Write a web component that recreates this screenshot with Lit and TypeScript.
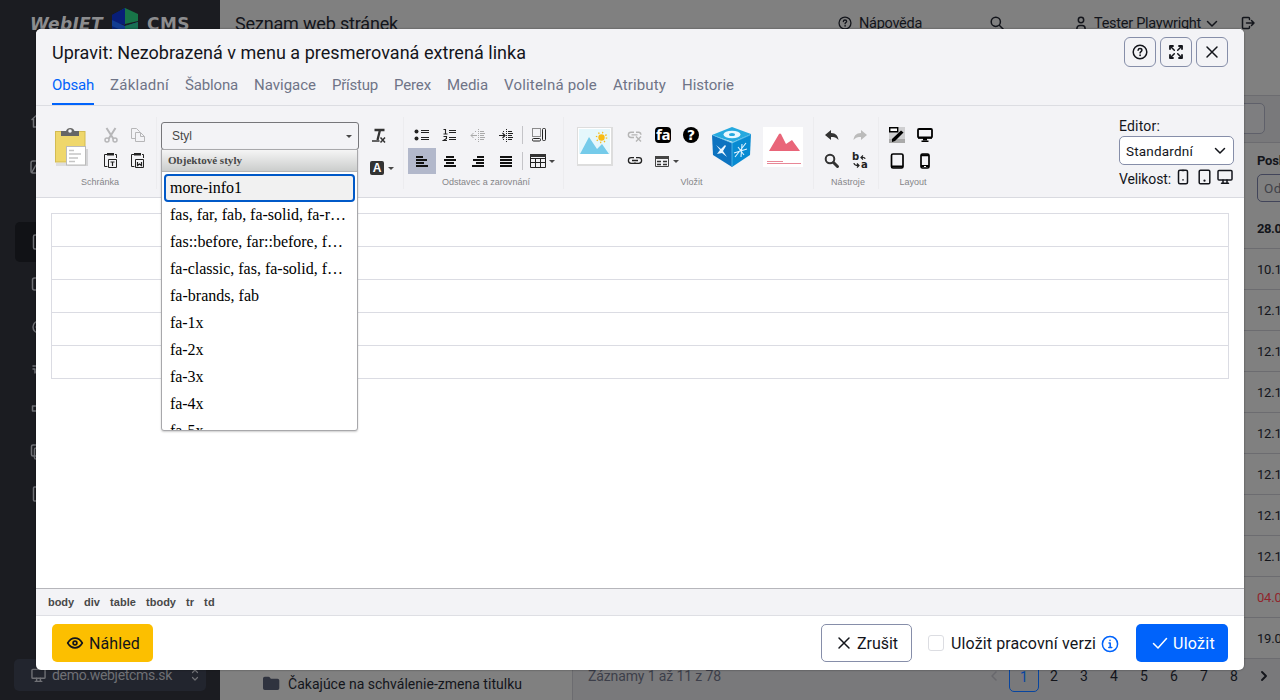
import { LitElement, html, css, svg, nothing } from "lit";
import { customElement, property } from "lit/decorators.js";

/** One line of text whose tracking is spread so that it takes a given width. */
@customElement("fit-text")
class FitText extends LitElement {
  @property() text = "";
  @property({ type: Number }) width = 0;
  static styles = css`
    :host { display: inline-block; white-space: pre; flex: none; }
  `;
  render() {
    return html`<span>${this.text}</span>`;
  }
  updated() {
    const span = this.renderRoot.querySelector("span") as HTMLElement;
    span.style.letterSpacing = "0px";
    const natural = span.getBoundingClientRect().width;
    if (this.width && this.text.length) {
      span.style.letterSpacing = `${(this.width - natural) / this.text.length}px`;
    }
  }
}

const fit = (text: string, width: number) =>
  html`<fit-text .text=${text} .width=${width}></fit-text>`;

const icon = (w: number, h: number, body: unknown, box = `0 0 ${w} ${h}`) =>
  html`<svg width=${w} height=${h} viewBox=${box} fill="none" stroke="currentColor" stroke-width="1.5" stroke-linecap="round" stroke-linejoin="round">${body}</svg>`;

const help = (s: number) =>
  icon(s, s, svg`<circle cx="8" cy="8" r="6.8"/><path d="M6.1 6.3C6.2 5.2 7 4.6 8 4.6s1.9.7 1.9 1.6c0 1.3-1.8 1.4-1.8 2.7"/><path d="M8.1 11.2v.1" stroke-width="1.8"/>`, "0 0 16 16");
const search = icon(14, 14, svg`<circle cx="5.8" cy="5.8" r="4.6"/><path d="m9.3 9.3 4 4"/>`);
const user = icon(12, 15, svg`<circle cx="6" cy="4" r="2.700"/><path d="M1.900 14v-1.600a3 3 0 0 1 3-3h2.200a3 3 0 0 1 3 3V14"/>`);
const chevron = icon(12, 8, svg`<path d="m1.500 1.500 4.500 4.500 4.500-4.500"/>`);
const logout = icon(14, 14, svg`<path d="M8.500 3.500V2.500a1 1 0 0 0-1-1h-5a1 1 0 0 0-1 1v9a1 1 0 0 0 1 1h5a1 1 0 0 0 1-1v-1M5.500 7h7.500M10.500 4.500 13 7l-2.500 2.500"/>`);
const expand = icon(16, 16, svg`<path d="M2 5V2h3M11 2h3v3M14 11v3h-3M5 14H2v-3" stroke-width="1.800"/><path d="M2.300 2.300l4 4M13.700 2.300l-4 4M13.700 13.700l-4-4M2.300 13.700l4-4"/>`);
const cross = icon(14, 14, svg`<path d="m2 2 10 10M12 2 2 12"/>`);
const eye = icon(18, 14, svg`<path d="M1.700 7C3.500 4 5.800 2.200 9 2.200S14.500 4 16.300 7C14.500 10 12.200 11.800 9 11.800S3.500 10 1.700 7Z" stroke-width="1.700"/><circle cx="9" cy="7" r="1.900" stroke-width="1.700"/>`);
const check = icon(16, 14, svg`<path d="m1.500 7.500 4.500 4.500 8.500-9.500"/>`);
const info = icon(18, 18, svg`<circle cx="9" cy="9" r="7.600"/><path d="M8 8h1.200v4.500M7.800 12.600h3M9 5.300v.1"/>`);
const monitor = (w: number) =>
  icon(w, w, svg`<rect x="1" y="1.500" width="14" height="9.500" rx="1"/><path d="M6 11v3M10 11v3M4.500 14.300h7"/>`, "0 0 16 16");
const phone = icon(12, 16, svg`<rect x="1.500" y="1.200" width="9" height="13.600" rx="1.500"/><path d="M6 10.800v.1M5 1.500h2"/>`);
const tablet = icon(13, 16, svg`<rect x="1.200" y="1.200" width="10.600" height="13.600" rx="1.300"/><path d="M6.500 11.500v.2" stroke-width="2.200"/>`);
const prev = icon(8, 12, svg`<path d="m6 2-4 4 4 4"/>`);
const next = icon(8, 12, svg`<path d="m2 2 4 4-4 4" stroke-width="1.900"/>`);
const updown = icon(8, 12, svg`<path d="m1.500 3.500 2.500-2.500 2.500 2.500M1.500 8.500 4 11l2.500-2.500" stroke-width="1.200"/>`);
const folder = html`<svg width="17" height="15" viewBox="0 0 17 15"><path fill="#2f333f" d="M0 2.500A1.800 1.800 0 0 1 1.800.7h3.700c.6 0 1 .2 1.400.7l.9 1.300h6.700A1.800 1.800 0 0 1 16.300 4.500v7.700A1.800 1.800 0 0 1 14.500 14H1.800A1.800 1.800 0 0 1 0 12.200Z"/></svg>`;

const navIcons = [
  svg`<path d="M2 8.500 9 2l7 6.500M3.500 8v8h3.500v-5h4v5h3.500V8"/>`,
  svg`<rect x="1" y="3" width="16" height="12" rx="2"/><path d="m2 14 4-7 4 5 3-3 3 5"/>`,
  svg`<rect x="3.500" y="2" width="12" height="14" rx="1.500"/>`,
  svg`<rect x="2.500" y="3" width="13" height="12" rx="2"/>`,
  svg`<circle cx="9" cy="10" r="6"/><path d="M6 10h6"/>`,
  svg`<path d="M3 7h12M5 13h10M3 10h2v4"/>`,
  svg`<rect x="2.500" y="5" width="5" height="5"/><path d="M8 8h7"/>`,
  svg`<rect x="1.500" y="2" width="10" height="11" rx="1.500"/><rect x="4.500" y="5" width="11" height="11" rx="1.500"/>`,
  svg`<rect x="3.500" y="2" width="12" height="14" rx="1"/>`,
];

const px = (body: unknown, w = 16, h = 16) =>
  html`<svg width=${w} height=${h} viewBox="0 0 ${w} ${h}" fill="none" stroke="#222">${body}</svg>`;

const lines = (rows: [number, number, number][]) =>
  svg`${rows.map(([x, y, w]) => svg`<rect x=${x} y=${y} width=${w} height="2" fill="#111" stroke="none"/>`)}`;

const ck = {
  paste: px(svg`<g stroke="none"><path fill="#d8d8da" d="M1 36h12v3H1z" opacity=".8"/><rect x=".5" y="4.500" width="29.500" height="30.500" fill="#efd76b" stroke="#d3bb52"/><path d="M6 9V4h5a4.500 4.500 0 0 1 8.500 0H24v5Z" fill="#666"/><circle cx="15" cy="4" r="1.800" fill="#f3f3f6"/><path d="M13 22h20v17H13z" fill="#d4d4d6"/><rect x="11.500" y="19.500" width="19" height="18.500" fill="#fff" stroke="#bbb"/></g><path d="M14 23.500h5M14 27h12M14 31h9M14 34.500h6" stroke="#c5c5c5" stroke-width="1.500"/>`, 33, 41),
  cut: px(svg`<g stroke="#b6b6b8"><path d="m3.500 1 7 11M12.500 1l-7 11" stroke-width="2"/><circle cx="4" cy="13" r="2" stroke-width="1.500"/><circle cx="12" cy="13" r="2" stroke-width="1.500"/></g>`),
  copy: px(svg`<g stroke="#b6b6b8"><path d="M5.500 11.500h-4v-10h5l3 3v1"/><path d="M5.500 5.500h5l4 4v5h-9zM10.500 5.500v4h4"/></g>`),
  pasteText: px(svg`<path d="M4 1.500H1.500v12h3M12 1.500h1.500V5"/><path d="M4 0h7v2.500H4z" fill="#222" stroke="none"/><path d="M5.500 6.500h8v8h-8z"/><path d="M7.500 9h4M9.500 9v4" stroke-width="1.200"/>`),
  pasteWord: px(svg`<path d="M4 1.500H1.500v12h3M12 1.500h1.500V5"/><path d="M4 0h7v2.500H4z" fill="#222" stroke="none"/><path d="M5.500 6.500h8v8h-8z"/><path d="M7.500 9v3.500l2-1.500 2 1.500V9" stroke-width="1.200"/>`),
  clear: px(svg`<path d="M3.500 2h10M9 2 6.500 12" stroke="#333" stroke-width="2.300"/><path d="M1 13h7.500" stroke="#333" stroke-width="1.300"/><path d="m9.500 9.500 4.500 5M14 9.500l-4.500 5" stroke="#333" stroke-width="1.500"/>`),
  bullets: px(svg`<circle cx="2.500" cy="4.500" r="2" fill="#222" stroke="none"/><circle cx="2.500" cy="11.500" r="2" fill="#222" stroke="none"/><path d="M7 3.500h8M7 5.500h8M7 10.500h8M7 12.500h8"/>`),
  numbers: px(svg`<path d="M1.500 2.500h2V7M1.500 7h4M1.500 9.500h3v2l-3 2h3.500" stroke-width="1.100"/><path d="M7 3.500h7M7 5.500h7M7 10.500h7M7 12.500h7"/>`),
  outdent: px(svg`<g stroke="#aaa"><path d="M5 4.500h2M5 12.500h2M8.500 2v13" stroke-dasharray="1 1"/><path d="M10 4.500h4M10 6.500h5M10 8.500h4M10 10.500h5M10 12.500h4M1 8.500h6M3.500 6 1 8.500 3.500 11"/></g>`),
  indent: px(svg`<path d="M5 4.500h2M5 12.500h2M8.500 2v13" stroke-dasharray="1 1"/><path d="M10 4.500h4M10 6.500h5M10 8.500h4M10 10.500h5M10 12.500h4M1 8.500h6M4.500 6 7 8.500 4.500 11" stroke-width="1.200"/>`),
  blockDiv: px(svg`<path d="M1.500 1.500h8v8h-8z" stroke-dasharray="1 1"/><rect x="11.500" y="1.500" width="3" height="12" rx="1"/><rect x="1.500" y="11.500" width="8" height="2.500" rx="1"/>`),
  left: px(lines([[2, 3, 7], [2, 6, 11], [2, 9, 8], [2, 12, 12]])),
  center: px(lines([[4, 3, 8], [2, 6, 12], [4, 9, 8], [2, 12, 12]])),
  right: px(lines([[7, 3, 7], [3, 6, 11], [6, 9, 8], [2, 12, 12]])),
  justify: px(lines([[2, 3, 12], [2, 6, 12], [2, 9, 12], [2, 12, 12]])),
  table: px(svg`<path d="M.5 2.500h15v12H.5zM.5 5.500h15M.5 9.500h15M5.500 5v9M10.500 5v9"/><path d="M0 1h16v3H0z" fill="#333" stroke="none"/>`),
  image: px(svg`<g stroke="none"><rect width="36" height="39" fill="#ddd"/><rect x="1" y="1" width="33" height="36" fill="#fff"/><rect x="2" y="2" width="31" height="25" fill="#e5f7fc"/><path d="m3 27 9-17 8 12 5-5 7 10z" fill="#75cbea"/><circle cx="24.500" cy="10.500" r="3.200" fill="#f8bc16"/></g><circle cx="24.500" cy="10.500" r="5" stroke="#f8bc16" stroke-dasharray="1.200 2.730" stroke-width="1.500"/>`, 36, 39),
  unlink: px(svg`<g stroke="#b5b5b5" stroke-width="1.400"><path d="M7 5.200H4a2.600 2.600 0 0 0 0 5.300h3M9 5.200h3a2.600 2.600 0 0 1 2 2.500M4.500 7.900h6"/><path d="m9 9.500 5 5M14 9.500l-5 5"/></g>`),
  link: px(svg`<path d="M7 4.700H4.200a2.800 2.800 0 0 0 0 5.600H7a2 2 0 0 0 1.500-.8M9 4.700h2.800a2.800 2.800 0 0 1 0 5.600H9a2 2 0 0 1-1.500-.8M5 7.500h6" stroke-width="1.300"/>`),
  fa: html`<span class="fa">fa</span>`,
  help: html`<span class="qm">?</span>`,
  form: px(svg`<path d="M1.500 3.500h13v10h-13z" stroke="#444"/><path d="M1 3h14v3H1z" fill="#444" stroke="none"/><path d="M3 8.500h4M3 11.500h4M9 8.500h4M9 11.500h4" stroke="#333" stroke-width="1.700"/>`),
  cube: px(svg`<g stroke="none"><path d="M20 0 39 7 21 15 0 8Z" fill="#25a9df"/><path d="m0 8 20 8v24L1 28Z" fill="#0d73c0"/><path d="m20 16 19-9-1 21-18 12Z" fill="#088bd2"/><ellipse cx="20" cy="7.500" rx="8.500" ry="3.800" fill="#e8f8ff"/><ellipse cx="20" cy="7.500" rx="3" ry="1.600" fill="#25a9df"/><path d="m4 18 5 4 4-4 1 1-3 5 4 6-5-4-5 1 3-4Z" fill="#eaf6ff"/></g><path d="m23 30 11-14M26 20l6 8M22 26l13-4M30 17l-1 13" stroke="#dff3ff" stroke-width="1.100"/><path d="m1 8 19 8 18-8M20 16v23" stroke="#58c0ed" stroke-width=".8"/>`, 39, 40),
  card: px(svg`<g stroke="none"><rect width="40" height="40" fill="#fff"/><path d="M6 24 16 7q1-1 2 0l5 10 6-4 8 11z" fill="#e96579"/></g><path d="M4 34.500h16M4 36.500h34" stroke="#e88797"/>`, 40, 40),
  undo: px(svg`<path d="M7 3v3c5 0 7 3 7.500 7C12.500 10.500 10 10 7 10v3L1 8Z" fill="#333" stroke="none"/>`),
  redo: px(svg`<path d="M9 3v3c-5 0-7 3-7.500 7C3.500 10.500 6 10 9 10v3l6-5Z" fill="#bbb" stroke="none"/>`),
  find: px(svg`<circle cx="6" cy="6" r="4.300" stroke="#333" stroke-width="2"/><path d="m9.500 9.500 4 4" stroke="#333" stroke-width="3" stroke-linecap="round"/>`),
  replace: html`<span class="rep"><b>b</b><b>a</b>${px(svg`<path d="M9 4.500h2.500c1 0 1.500.5 1.500 1.500M11 2.500l-2 2 2 2M2 10c0 2 1 2.500 4.500 2.500M5 10.500l2 2-2 2" stroke-width="1.200"/>`)}</span>`,
  blocks: px(svg`<path d="M0 0h16v16H0z" fill="#cfcfd1" stroke="none"/><path d="M0 12h16v4H0z" fill="#aaa" stroke="none"/><path d="M.7.7h8v4h-8z" fill="#fff" stroke="#000" stroke-width="1.400"/><path d="M3 15v-3L12 3.500l2.500 2L6 14z" fill="#000" stroke="none"/>`),
  desktop: px(svg`<rect x="1" y="2" width="14" height="8.500" rx="1" stroke="#000" stroke-width="1.800"/><path d="M1 11h14M6 12.500h4M4.500 14.200h7" stroke="#000" stroke-width="1.500"/>`),
  tab: px(svg`<rect x="2.500" y="1" width="11.500" height="14" rx="1.500" stroke="#000" stroke-width="1.700"/><path d="M2 13.500h12" stroke="#000" stroke-width="1.800"/>`),
  phone: px(svg`<rect x="4" y="1" width="8" height="14" rx="1.500" stroke="#000" stroke-width="1.700"/><path d="M4 13h8M4 2.300h8" stroke="#000" stroke-width="2"/><path d="M7 13.500h2" stroke="#fff"/>`),
};

const tabs: [string, number][] = [
  ["Obsah", 42], ["Základní", 59], ["Šablona", 53], ["Navigace", 62], ["Přístup", 46],
  ["Perex", 37], ["Media", 41], ["Volitelná pole", 93], ["Atributy", 53], ["Historie", 52],
];
const styleNames: [string, number][] = [
  ["more-info1", 72], ["fas, far, fab, fa-solid, fa-r…", 176], ["fas::before, far::before, f…", 173],
  ["fa-classic, fas, fa-solid, f…", 173], ["fa-brands, fab", 89], ["fa-1x", 33.5], ["fa-2x", 33.5],
  ["fa-3x", 33.5], ["fa-4x", 33.5], ["fa-5x", 33.5],
];
const dates = ["28.0", "10.1", "12.1", "12.1", "12.1", "12.1", "12.1", "12.1", "12.1", "04.0", "19.0"];
const path: [string, number][] = [["body", 26], ["div", 16], ["table", 26], ["tbody", 30], ["tr", 8], ["td", 11]];

@customElement("app-root")
class AppRoot extends LitElement {
  static styles = css`
    :host { display: block; width: 1280px; height: 700px; overflow: hidden; position: relative; font-family: Roboto, "Noto Sans", sans-serif; color: #13151b; }
    * { box-sizing: border-box; }
    svg { display: block; flex: none; }
    .page { display: flex; height: 700px; background: #808080; }
    .side { width: 220px; background: #1b1c21; display: flex; flex-direction: column; color: #6f7075; flex: none; }
    .brand { height: 97px; display: flex; padding: 8px 0 0 30px; color: #8c8c8e; font: italic bold 17px/32px "DejaVu Sans", sans-serif; }
    .brand svg { margin: 0 8px 0 8px; }
    .cms { font-style: normal; }
    .nav { height: 42px; display: flex; align-items: center; padding-left: 15px; margin-left: 15px; border-radius: 5px; }
    .nav.first { height: 46px; }
    .nav.second { height: 48px; margin-bottom: 30px; }
    .nav.on { background: #111216; height: 40px; margin-top: 1px; margin-bottom: 1px; }
    .site { margin: auto 14px 9px; height: 32px; background: #22252e; border-radius: 5px; display: flex; align-items: center; padding: 0 7px 0 17px; font-size: 14px; }
    .site fit-text { margin: 0 auto 0 6px; }
    .main { flex: 1; display: flex; flex-direction: column; min-width: 0; }
    .top { height: 95px; display: flex; align-items: flex-start; padding: 14px 26px 0 15px; font-size: 14.500px; line-height: 20px; }
    .top svg { margin-top: 2px; }
    .ttl { font-size: 18px; }
    .h1 { margin-left: 440px; margin-right: 7px; }
    .h2 { margin-left: 68px; margin-right: 71px; }
    .h3 { margin-right: 7px; }
    .top .chev { margin: 4px 23px 0 5px; }
    .split { flex: 1; display: flex; border-top: 1px solid #6c6c70; min-height: 0; }
    .tree { width: 353px; border-right: 1px solid #6c6c70; display: flex; align-items: flex-end; padding: 0 0 7px 43px; font-size: 14px; line-height: 18px; gap: 8px; flex: none; }
    .tree svg { margin-bottom: 2px; }
    .data { flex: 1; display: flex; flex-direction: column; min-width: 0; }
    .filter { height: 47px; background: #79797b; border-bottom: 1px solid #6c6c70; padding: 7px 15px 0; display: flex; justify-content: flex-end; flex: none; }
    .filter div { width: 60px; height: 31px; border: 1px solid #5f606a; border-radius: 5px; background: #7e7e80; }
    .col { padding-left: 684px; flex: none; overflow: hidden; white-space: nowrap; font-size: 13px; }
    .head { height: 65px; padding-top: 9px; line-height: 18px; font-weight: bold; }
    .head .in { margin-top: 4px; width: 60px; height: 28px; border: 1px solid #42455a; border-radius: 5px; font-weight: 400; font-size: 13.500px; line-height: 26px; padding-left: 6px; color: #404249; }
    .row { height: 41px; line-height: 42px; border-bottom: 1px solid #6c6c70; }
    .row.bold { font-weight: bold; }
    .row.red { color: #91252c; }
    .foot { flex: 1; background: #79797b; display: flex; align-items: center; padding: 0 12px 7px 15px; font-size: 14px; color: #3d3f4a; }
    .pages { margin-left: auto; display: flex; align-items: center; color: #13151b; }
    .pages span { width: 30px; text-align: center; line-height: 30px; }
    .pages .cur { border: 1px solid #0745a0; border-radius: 5px; color: #0745a0; height: 31px; }
    .pages .prev { color: #68686d; margin-right: 11px; }
    .pages .next { margin-left: 11px; }

    .modal { position: absolute; left: 36px; top: 29px; width: 1208px; height: 641px; background: #fff; border-radius: 5px; overflow: hidden; display: flex; flex-direction: column; box-shadow: 0 0 2px rgba(0,0,0,.5); }
    .mh { height: 77px; background: #f3f3f6; border-bottom: 1px solid #dcdde2; padding: 8px 16px 0; flex: none; }
    .mt { display: flex; justify-content: space-between; height: 37px; font-size: 18px; line-height: 32px; }
    .btns { display: flex; gap: 4px; }
    .ib { width: 32px; height: 30px; border: 1px solid #868ea9; border-radius: 6px; display: grid; place-items: center; }
    .tabs { display: flex; gap: 16px; height: 31px; font-size: 15px; line-height: 22px; color: #6f7487; }
    .tabs .on { color: #0063fb; border-bottom: 2px solid #0063fb; }
    .rib { height: 92px; background: #f3f3f6; border-bottom: 1px solid #d9dae0; display: flex; padding-top: 11px; flex: none; }
    .g { height: 72px; display: flex; flex-direction: column; border-right: 1px solid #ececef; padding-top: 5px; flex: none; }
    .cells { display: flex; height: 53px; align-items: flex-start; }
    .grid { display: grid; grid-auto-rows: 26px; }
    .grid > * { display: flex; place-content: center; align-items: center; }
    .lab { font: 9px/12px "Liberation Sans", sans-serif; color: #858588; text-align: center; margin-top: 1px; }
    .g1 { width: 121px; padding-left: 19px; }
    .g1 .cells > svg { margin-top: 5px; }
    .g1 .grid { grid-template-columns: 28px 26px; margin-left: 9px; }
    .g1 .lab { width: 90px; }
    .g2 { width: 247px; padding-left: 4px; flex-direction: row; }
    .g3 { width: 160px; padding-left: 4px; }
    .g3 .grid { grid-template-columns: repeat(4, 28px) 3px 32px; }
    .g3 .grid .tb { justify-content: flex-start; padding-left: 7px; }
    .sep { width: 1px; height: 18px; margin: 4px 0 4px 2px; background: #c4c4c8; }
    .hl { background: #b2b8cb; }
    .g3 .lab { width: 156px; }
    .g4 { width: 250px; padding-left: 13px; }
    .g4 .grid { grid-template-columns: repeat(3, 28px); margin: 0 7px 0 8px; }
    .g4 .grid .fm { justify-content: flex-start; padding-left: 5px; }
    .g4 .cells > svg { margin-top: 5px; }
    .g4 .cells > svg:last-child { margin-left: 12px; }
    .g4 .lab { width: 229px; }
    .g5 { width: 65px; padding-left: 4px; }
    .g6 { border: 0; padding-left: 4px; width: 64px; }
    .g5 .grid, .g6 .grid { grid-template-columns: 28px 28px; }
    .combo { width: 198px; height: 28px; border: 1px solid #76767a; border-radius: 3px; display: flex; align-items: center; justify-content: space-between; padding: 0 6px 0 10px; font: 12px "Liberation Sans", sans-serif; color: #484848; }
    .car { width: 0; height: 0; border: 3px solid transparent; border-top-color: #474747; border-bottom: 0; flex: none; }
    .fmt { display: flex; flex-direction: column; padding-left: 12px; }
    .fmt > svg { margin-top: 6px; }
    .bg { display: flex; align-items: center; gap: 4px; margin: 17px 0 0 -1px; }
    .bg b { width: 14px; height: 14px; border-radius: 2px; background: #333; color: #fff; font: bold 12px/14px "Liberation Sans", sans-serif; text-align: center; }
    .gap { margin-left: 3px; }
    .fa { width: 16px; height: 16px; border-radius: 4px; background: #000; color: #fff; font: bold 15px/14px "Noto Sans", sans-serif; letter-spacing: -.5px; text-align: center; }
    .qm { width: 16px; height: 16px; border-radius: 50%; background: #000; color: #fff; font: bold 14px/16px "DejaVu Sans", sans-serif; text-align: center; }
    .rep { width: 16px; height: 16px; position: relative; font: 10px/10px "DejaVu Sans", sans-serif; color: #222; }
    .rep b { position: absolute; left: 0; top: -1px; }
    .rep b + b { left: 9px; top: 7px; }
    .ed { margin: 0 10px 0 auto; width: 115px; font-size: 14px; line-height: 18px; }
    .sel { height: 29px; margin: 1px 0 2px; background: #fff; border: 1px solid #868ea9; border-radius: 5px; display: flex; justify-content: space-between; align-items: center; padding: 0 7px 0 6px; font-size: 13.500px; }
    .vel { display: flex; align-items: center; height: 24px; }
    .vel svg { margin-top: -4px; margin-left: 8px; }
    .vel svg:nth-of-type(1) { margin-left: 6px; }
    .vel svg:nth-of-type(2) { margin-left: 9px; }
    .vel svg:nth-of-type(3) { margin-left: 6px; }
    .body { flex: 1; padding: 15px 15px 0; }
    .tbl { border: 1px solid #dbdce3; border-bottom: 0; }
    .tbl div { height: 33px; border-bottom: 1px solid #dbdce3; }
    .stat { height: 28px; background: #f3f3f6; border-top: 1px solid #b6b6bb; border-bottom: 1px solid #dedfe4; display: flex; gap: 10px; padding-left: 12px; font: bold 11px/26px "Liberation Sans", sans-serif; color: #484848; flex: none; }
    .mf { height: 54px; display: flex; align-items: center; padding: 0 16px; font-size: 16px; flex: none; }
    .b { height: 38px; border-radius: 5px; display: flex; align-items: center; }
    .yellow { background: #fcbf00; width: 101px; padding-left: 14px; gap: 5px; }
    .white { border: 1px solid #868ea9; width: 91px; padding-left: 15px; gap: 6px; margin-left: auto; margin-right: 16px; }
    .blue { background: #0063fb; color: #fff; width: 92px; padding-left: 16px; gap: 5px; margin-left: 17px; }
    .cb { width: 16px; height: 16px; border: 1px solid #dcdde2; border-radius: 3px; margin-right: 7px; }
    .inf { color: #0063fb; margin: 1px 0 0 5px; }

    .menu { position: absolute; left: 161px; top: 149px; width: 197px; height: 282px; background: #fff; border: 1px solid #a8a8ab; border-radius: 0 0 3px 3px; overflow: hidden; box-shadow: 0 1px 2px rgba(0,0,0,.2); font: 16px/26px "Liberation Serif", serif; color: #000; }
    .mhd { height: 22px; background: linear-gradient(#f5f5f5, #cbcdcc); border-bottom: 1px solid #b6b6b6; font-size: 11px; line-height: 21px; font-weight: bold; color: #474747; padding-left: 6px; }
    .opt { height: 27px; padding-left: 8px; }
    .opt.on { height: 28px; margin: 2px 2px 0; padding-left: 4px; border: 2px solid #0059c8; border-radius: 4px; background: #f1f1f1; line-height: 24px; }
  `;

  render() {
    return html`
      <div class="page">
        <div class="side">
          <div class="brand">
            ${fit("WebJET", 73)}
            <svg width="28" height="30" viewBox="0 0 28 30"><path d="M14 0 1 7v8l13-4z" fill="#071c7b"/><path d="m14 0 13 6v7L14 16 1 8z" fill="#187548"/><path d="M14 0v17L1 14V7z" fill="#081e78"/><path d="m1 12 13 6 13-4v10l-13 6-13-6z" fill="#123d91"/><path d="m14 18 13-4v10l-13 6z" fill="#187053"/><path d="m1 18 13 6v6L1 24z" fill="#0a2777"/></svg>
            <span class="cms">${fit("CMS", 43)}</span>
          </div>
          ${navIcons.map((n, i) => html`<div class="nav ${["first", "second", "on"][i] ?? ""}">${icon(18, 18, n)}</div>`)}
          <div class="site">${monitor(15)}${fit("demo.webjetcms.sk", 120)}${updown}</div>
        </div>
        <div class="main">
          <div class="top">
            <span class="ttl">${fit("Seznam web stránek", 163)}</span>
            <span class="h1">${help(14)}</span>${fit("Nápověda", 63)}
            <span class="h2">${search}</span>
            <span class="h3">${user}</span>${fit("Tester Playwright", 107)}
            <span class="chev">${chevron}</span>${logout}
          </div>
          <div class="split">
            <div class="tree">${folder}${fit("Čakajúce na schválenie-zmena titulku", 234)}</div>
            <div class="data">
              <div class="filter"><div></div></div>
              <div class="col head">${fit("Posl", 25)}<div class="in">${fit("Od", 18)}</div></div>
              ${dates.map((d, i) => html`<div class="col row ${i === 0 ? "bold" : i === 9 ? "red" : ""}">${fit(d, 24.5)}</div>`)}
              <div class="foot">
                ${fit("Záznamy 1 až 11 z 78", 133)}
                <div class="pages">
                  <i class="prev">${prev}</i>
                  ${[1, 2, 3, 4, 5, 6, 7, 8].map((n) => html`<span class=${n === 1 ? "cur" : nothing}>${n}</span>`)}
                  <i class="next">${next}</i>
                </div>
              </div>
            </div>
          </div>
        </div>
      </div>

      <div class="modal">
        <div class="mh">
          <div class="mt">
            ${fit("Upravit: Nezobrazená v menu a presmerovaná extrená linka", 474)}
            <div class="btns"><div class="ib">${help(16)}</div><div class="ib">${expand}</div><div class="ib">${cross}</div></div>
          </div>
          <div class="tabs">${tabs.map(([t, w], i) => html`<div class=${i ? nothing : "on"}>${fit(t, w)}</div>`)}</div>
        </div>
        <div class="rib">
          <div class="g g1">
            <div class="cells">${ck.paste}
              <div class="grid"><span>${ck.cut}</span><span>${ck.copy}</span><span>${ck.pasteText}</span><span>${ck.pasteWord}</span></div>
            </div>
            <div class="lab">${fit("Schránka", 38)}</div>
          </div>
          <div class="g g2">
            <div class="combo"><span>Styl</span><i class="car"></i></div>
            <div class="fmt">${ck.clear}<div class="bg"><b>A</b><i class="car"></i></div></div>
          </div>
          <div class="g g3">
            <div class="cells"><div class="grid">
              <span>${ck.bullets}</span><span>${ck.numbers}</span><span>${ck.outdent}</span><span>${ck.indent}</span><i class="sep"></i><span>${ck.blockDiv}</span>
              <span class="hl">${ck.left}</span><span>${ck.center}</span><span>${ck.right}</span><span>${ck.justify}</span><i class="sep"></i><span class="tb">${ck.table}<i class="car gap"></i></span>
            </div></div>
            <div class="lab">${fit("Odstavec a zarovnání", 88)}</div>
          </div>
          <div class="g g4">
            <div class="cells">${ck.image}
              <div class="grid">
                <span>${ck.unlink}</span><span>${ck.fa}</span><span>${ck.help}</span>
                <span>${ck.link}</span><span class="fm">${ck.form}<i class="car gap"></i></span><span></span>
              </div>${ck.cube}${ck.card}
            </div>
            <div class="lab">${fit("Vložit", 22)}</div>
          </div>
          <div class="g g5">
            <div class="cells"><div class="grid"><span>${ck.undo}</span><span>${ck.redo}</span><span>${ck.find}</span><span>${ck.replace}</span></div></div>
            <div class="lab">${fit("Nástroje", 34)}</div>
          </div>
          <div class="g g6">
            <div class="cells"><div class="grid"><span>${ck.blocks}</span><span>${ck.desktop}</span><span>${ck.tab}</span><span>${ck.phone}</span></div></div>
            <div class="lab">${fit("Layout", 27)}</div>
          </div>
          <div class="ed">
            ${fit("Editor:", 41)}
            <div class="sel">${fit("Standardní", 67)}${chevron}</div>
            <div class="vel">${fit("Velikost:", 52)}${phone}${tablet}${monitor(16)}</div>
          </div>
        </div>
        <div class="body"><div class="tbl">${[0, 1, 2, 3, 4].map(() => html`<div></div>`)}</div></div>
        <div class="stat">${path.map(([t, w]) => fit(t, w))}</div>
        <div class="mf">
          <div class="b yellow">${eye}${fit("Náhled", 51)}</div>
          <div class="b white">${cross}${fit("Zrušit", 41)}</div>
          <div class="cb"></div>${fit("Uložit pracovní verzi", 145)}<span class="inf">${info}</span>
          <div class="b blue">${check}${fit("Uložit", 42)}</div>
        </div>
      </div>

      <div class="menu">
        <div class="mhd">${fit("Objektové styly", 74)}</div>
        ${styleNames.map(([t, w], i) => html`<div class="opt ${i ? "" : "on"}">${fit(t, w)}</div>`)}
      </div>
    `;
  }
}
